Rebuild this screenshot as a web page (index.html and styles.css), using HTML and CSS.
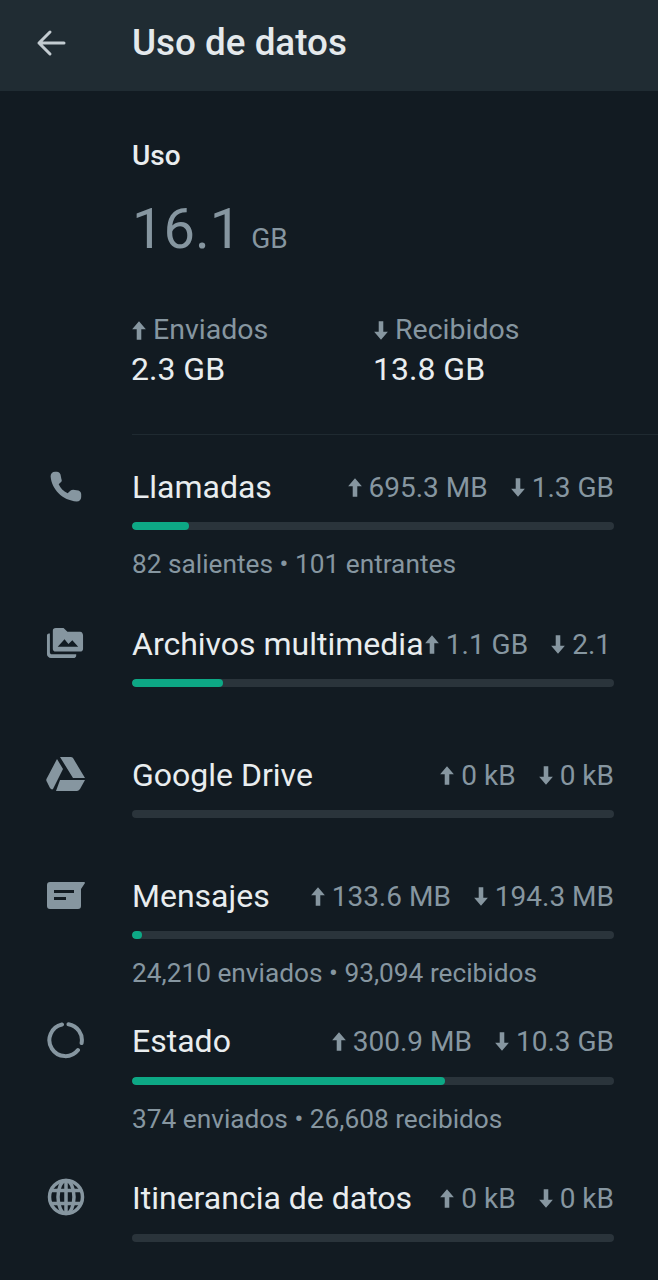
FILE: index.html
```html
<!DOCTYPE html>
<html lang="es">
<head>
    <meta charset="UTF-8">
    <title>Uso de datos</title>
    <link rel="stylesheet" href="styles.css">
</head>
<body>
    <svg class="defs" width="0" height="0">
        <symbol id="up" viewBox="0 0 14 20"><path d="M7 2 13 9H9V18H5V9H1Z"/></symbol>
        <symbol id="down" viewBox="0 0 14 20"><path d="M7 18 1 11H5V2H9V11H13Z"/></symbol>
    </svg>

    <header class="topbar">
        <svg class="back" viewBox="0 0 32 32"><path d="M29 16H4M15 5 4 16 15 27"/></svg>
        <h1>Uso de datos</h1>
    </header>

    <section class="summary">
        <h2>Uso</h2>
        <div class="total"><span class="total-num">16.1</span><span class="total-unit">GB</span></div>
        <div class="split">
            <div class="split-col">
                <div class="split-label"><svg class="arrow"><use href="#up"/></svg>Enviados</div>
                <div class="split-value">2.3 GB</div>
            </div>
            <div class="split-col">
                <div class="split-label"><svg class="arrow"><use href="#down"/></svg>Recibidos</div>
                <div class="split-value">13.8 GB</div>
            </div>
        </div>
    </section>

    <div class="divider"></div>

    <section class="row row-calls">
        <svg class="icon" viewBox="0 0 40 40"><path d="M9 3C6 3 4 5 4 8 5 22 17 35 33 36 36 36 38 34 38 31V28C38 26 37 25 35 24L29 23C27 23 26 24 25 25L23 27C18 25 15 21 13 17L15 15C16 14 17 13 16 11L15 6C14 4 13 3 11 3Z"/></svg>
        <div class="row-body">
            <div class="row-head">
                <span class="row-title">Llamadas</span>
                <span class="stats">
                    <span class="stat"><svg class="arrow"><use href="#up"/></svg>695.3 MB</span>
                    <span class="stat"><svg class="arrow"><use href="#down"/></svg>1.3 GB</span>
                </span>
            </div>
            <div class="bar"><div class="bar-fill" style="width: 11.9%"></div></div>
            <div class="row-sub">82 salientes • 101 entrantes</div>
        </div>
    </section>

    <section class="row row-media">
        <svg class="icon" viewBox="0 0 40 34" preserveAspectRatio="none"><path d="M1 9C1 8 2 7 3 7H4V27C4 28 5 29 6 29H31V30C31 32 30 33 28 33H5C3 33 1 31 1 29Z"/><path fill-rule="evenodd" d="M7 4C7 2 8 1 10 1H18L22 5H35C37 5 38 7 38 9V23C38 25 37 26 35 26H10C8 26 7 25 7 23ZM12 21H33L27 14 23 18 19 13Z"/></svg>
        <div class="row-body">
            <div class="row-head">
                <span class="row-title">Archivos multimedia</span>
                <span class="stats stats-cut">
                    <span class="stat"><svg class="arrow"><use href="#up"/></svg>1.1 GB</span>
                    <span class="stat"><svg class="arrow"><use href="#down"/></svg>2.1</span>
                </span>
            </div>
            <div class="bar"><div class="bar-fill" style="width: 18.9%"></div></div>
        </div>
    </section>

    <section class="row row-drive">
        <svg class="icon" viewBox="0 0 40 36"><path d="M14 1H25C26 1 27 2 27 2L39 22H27L14 1ZM11 3 17 13 7 33C6 34 5 33 4 32L1 26C0 25 0 23 1 22ZM14 24H39L34 33C33 34 32 35 31 35H10C10 35 14 24 14 24Z"/></svg>
        <div class="row-body">
            <div class="row-head">
                <span class="row-title">Google Drive</span>
                <span class="stats">
                    <span class="stat"><svg class="arrow"><use href="#up"/></svg>0 kB</span>
                    <span class="stat"><svg class="arrow"><use href="#down"/></svg>0 kB</span>
                </span>
            </div>
            <div class="bar"></div>
        </div>
    </section>

    <section class="row row-msg">
        <svg class="icon" viewBox="0 0 40 30"><path fill-rule="evenodd" d="M4 1H38C39 1 39 2 39 2L35 8V25C35 27 34 28 32 28H4C2 28 1 27 1 25V4C1 2 2 1 4 1ZM8 9V12H28V9ZM8 16V19H20V16Z"/></svg>
        <div class="row-body">
            <div class="row-head">
                <span class="row-title">Mensajes</span>
                <span class="stats">
                    <span class="stat"><svg class="arrow"><use href="#up"/></svg>133.6 MB</span>
                    <span class="stat"><svg class="arrow"><use href="#down"/></svg>194.3 MB</span>
                </span>
            </div>
            <div class="bar"><div class="bar-fill" style="width: 2%"></div></div>
            <div class="row-sub">24,210 enviados • 93,094 recibidos</div>
        </div>
    </section>

    <section class="row row-status">
        <svg class="icon icon-status" viewBox="0 0 38 38"><path d="M21.500 3.200A16 16 0 0 1 34.600 22M31 29A16 16 0 1 1 15 3.500"/></svg>
        <div class="row-body">
            <div class="row-head">
                <span class="row-title">Estado</span>
                <span class="stats">
                    <span class="stat"><svg class="arrow"><use href="#up"/></svg>300.9 MB</span>
                    <span class="stat"><svg class="arrow"><use href="#down"/></svg>10.3 GB</span>
                </span>
            </div>
            <div class="bar"><div class="bar-fill" style="width: 65%"></div></div>
            <div class="row-sub">374 enviados • 26,608 recibidos</div>
        </div>
    </section>

    <section class="row row-roam">
        <svg class="icon icon-globe" viewBox="0 0 38 38"><circle cx="19" cy="19" r="16.500"/><ellipse cx="19" cy="19" rx="8" ry="16.500"/><path d="M4 12.500H34M4 25.500H34M19 2.500V35.500"/></svg>
        <div class="row-body">
            <div class="row-head">
                <span class="row-title">Itinerancia de datos</span>
                <span class="stats">
                    <span class="stat"><svg class="arrow"><use href="#up"/></svg>0 kB</span>
                    <span class="stat"><svg class="arrow"><use href="#down"/></svg>0 kB</span>
                </span>
            </div>
            <div class="bar"></div>
        </div>
    </section>
</body>
</html>
```

FILE: styles.css
```css
body {
    margin: 0;
    height: 1280px;
    overflow: hidden;
    background-color: #121b22;
    font-family: Roboto, "Liberation Sans", sans-serif;
    color: #e9edef;
}
.defs {
    display: block;
    height: 0;
}
.topbar {
    display: flex;
    align-items: center;
    height: 91px;
    padding-bottom: 6px;
    box-sizing: border-box;
    background-color: #202c33;
}
.back {
    width: 32px;
    height: 32px;
    margin-left: 35px;
    fill: none;
    stroke: #c3ccd1;
    stroke-width: 3;
    stroke-linecap: round;
    stroke-linejoin: round;
}
.topbar h1 {
    margin: 0 0 0 65px;
    font-size: 36.800px;
    font-weight: 500;
    color: #e4e9ec;
}
.summary {
    padding: 50px 0 0 132px;
}
.summary h2 {
    margin: 0;
    font-size: 28px;
    line-height: 30px;
    font-weight: 500;
}
.total {
    display: flex;
    align-items: baseline;
    margin-top: 25px;
    color: #8696a0;
}
.total-num {
    font-size: 56px;
    line-height: 66px;
}
.total-unit {
    margin-left: 10px;
    font-size: 28px;
}
.split {
    display: flex;
    margin-top: 52px;
    margin-left: -1px;
}
.split-col {
    width: 242px;
}
.split-label {
    display: flex;
    align-items: center;
    font-size: 28.500px;
    line-height: 32px;
    color: #8696a0;
}
.split-value {
    margin-top: 6px;
    font-size: 32px;
    line-height: 34px;
}
.arrow {
    width: 16px;
    height: 23px;
    margin-right: 6px;
    flex: none;
    fill: #8696a0;
}
.divider {
    height: 1px;
    margin: 48px 0 0 132px;
    background-color: #1f2a31;
}
.row {
    display: flex;
}
.icon {
    flex: none;
    width: 40px;
    margin-left: 46px;
    margin-right: 46px;
    fill: #8696a0;
}
.row-body {
    flex: 1;
    margin-right: 44px;
    min-width: 0;
}
.row-head {
    display: flex;
    justify-content: space-between;
    align-items: center;
    height: 34px;
}
.row-title {
    font-size: 32px;
    white-space: nowrap;
}
.stats {
    display: flex;
    gap: 22px;
    font-size: 28px;
    color: #8696a0;
    white-space: nowrap;
}
.stats-cut {
    margin-right: 3px;
}
.stat {
    display: flex;
    align-items: center;
}
.bar {
    height: 8px;
    margin-top: 18px;
    border-radius: 4px;
    background-color: #2a343b;
    overflow: hidden;
}
.bar-fill {
    height: 100%;
    border-radius: 4px;
    background-color: #0da885;
}
.row-sub {
    margin-top: 19px;
    font-size: 26.250px;
    line-height: 30px;
    color: #8696a0;
}
.row-calls {
    margin-top: 35px;
}
.row-calls .icon {
    height: 36px;
    width: 36px;
    margin-right: 49px;
    margin-left: 47px;
    margin-top: -1px;
}
.row-media {
    margin-top: 48px;
}
.row-media .icon {
    width: 39px;
    height: 32px;
    margin-left: 46px;
    margin-right: 47px;
}
.row-drive {
    margin-top: 71px;
}
.row-drive .icon {
    height: 36px;
    margin-top: -2px;
}
.row-msg {
    margin-top: 61px;
}
.row-msg .icon {
    height: 30px;
    margin-top: 2px;
}
.row-status {
    margin-top: 36px;
}
.row-status .bar,
.row-roam .bar {
    margin-top: 19px;
}
.row-roam {
    margin-top: 47px;
}
.icon-status,
.icon-globe {
    height: 38px;
    width: 38px;
    margin-top: -3px;
    margin-left: 47px;
    margin-right: 47px;
    fill: none;
    stroke: #8696a0;
}
.icon-status {
    stroke-width: 4;
    stroke-linecap: round;
}
.icon-globe {
    stroke-width: 3.500;
}
```
